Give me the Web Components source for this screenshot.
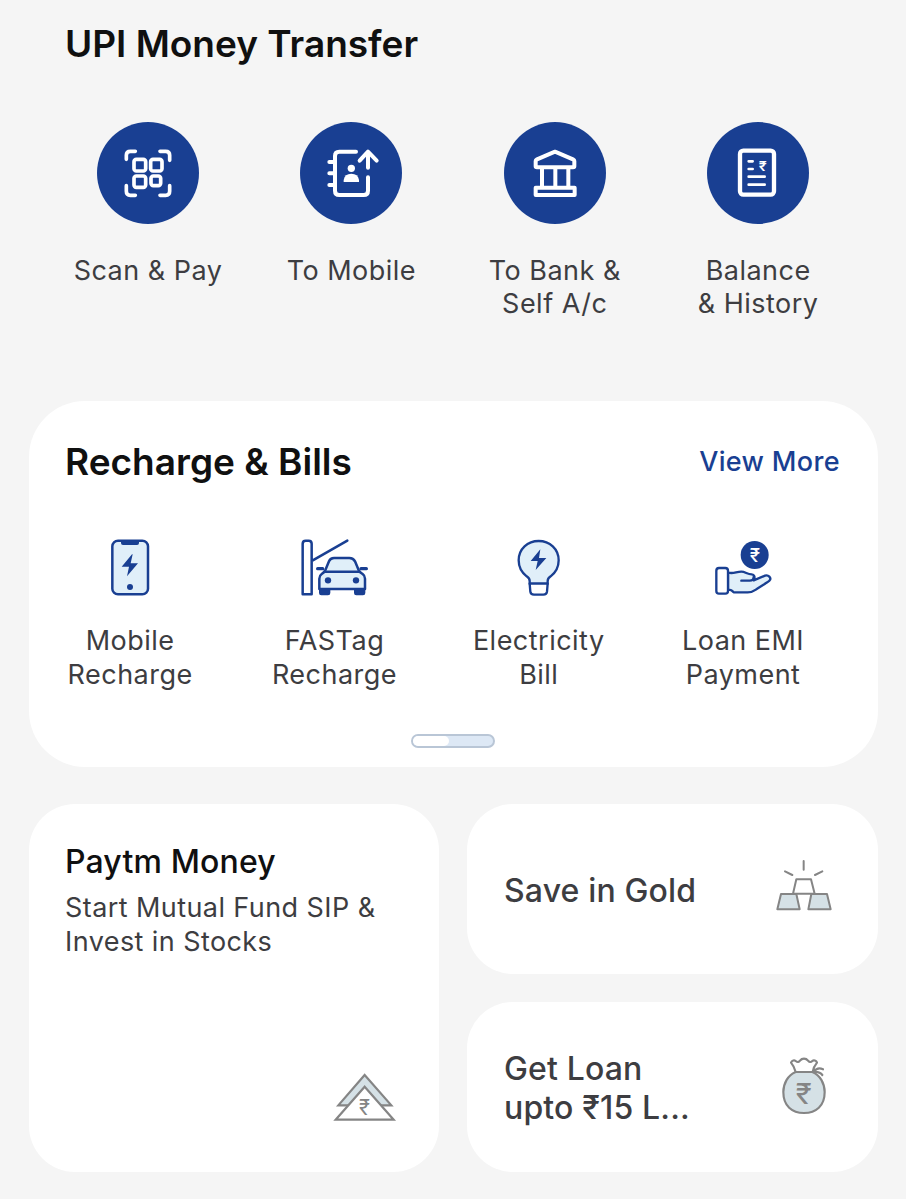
<!DOCTYPE html>
<html lang="en">
<head>
<meta charset="utf-8">
<title>UPI Money Transfer</title>
<style>
    body {
        margin: 0;
        background: #f5f5f5;
        font-family: Inter, "Liberation Sans", sans-serif;
        color: #101010;
    }
</style>
</head>
<body>
<home-page>
    <transfer-section slot="transfer" title="UPI Money Transfer">
        <pay-action text="Scan &amp; Pay">
            <svg viewBox="21 21 306 306" fill="none" stroke="#fff" stroke-width="11" stroke-linecap="round" stroke-linejoin="round">
                <path d="M109 133v-12q0-12 12-12h15M210 109h17q12 0 12 12v15M109 212v17q0 12 12 12h15M239 212v17q0 12-12 12h-17"/>
                <rect x="132" y="133" width="35" height="35" rx="7"/>
                <rect x="182" y="133" width="34" height="35" rx="7"/>
                <rect x="132" y="183" width="35" height="34" rx="7"/>
                <rect x="183" y="183" width="29" height="29" rx="7"/>
            </svg>
        </pay-action>
        <pay-action text="To Mobile">
            <svg viewBox="25 21 306 306" fill="none" stroke="#fff" stroke-width="12" stroke-linecap="round" stroke-linejoin="round">
                <path d="M193 110h-50q-13 0-13 13v104q0 13 13 13h73q13 0 13-13v-40M113 141h17M113 175h17M113 210h17M229 158v-47M204 137l25-27 26 27"/>
                <circle cx="179" cy="160" r="11" fill="#fff" stroke="none"/>
                <path d="M156 201v-6q3-19 23-19t23 19v6z" fill="#fff" stroke="none"/>
            </svg>
        </pay-action>
        <pay-action text="To Bank &amp;|Self A/c">
            <svg viewBox="25 21 306 306" fill="none" stroke="#fff" stroke-width="12" stroke-linejoin="round">
                <path d="M120 154v-16q0-3 4-5l54-23 54 23q4 2 4 5v16q0 3-4 3H124q-4 0-4-3z"/>
                <path d="M139 158v58M179 158v58M218 158v58"/>
                <path d="M120 218h117v22H120z"/>
            </svg>
        </pay-action>
        <pay-action text="Balance|&amp; History">
            <svg viewBox="27 21 306 306" fill="none" stroke="#fff" stroke-width="8" stroke-linecap="round">
                <rect x="126" y="107" width="102" height="132" rx="10" stroke-width="13"/>
                <path d="M152 139h12M152 162h12M152 185h48M152 209h48"/>
                <text x="182" y="169" textLength="24" lengthAdjust="spacingAndGlyphs" font-size="41" font-weight="600" fill="#fff" stroke="none">₹</text>
            </svg>
        </pay-action>
    </transfer-section>

    <bills-card slot="bills" title="Recharge &amp; Bills" link="View More">
        <bill-item text="Mobile|Recharge">
            <svg width="80" height="80" viewBox="0 -1 240 240" stroke="#193f92" stroke-width="7.5" stroke-linejoin="round">
                <rect x="67" y="46" width="107" height="161" rx="17" fill="#e0eff9"/>
                <path d="M93 45h54v8q0 6-6 6H99q-6 0-6-6z" fill="#193f92" stroke="none"/>
                <path d="M126 87l-31 37h22l-6 29 33-39h-22l6-27z" fill="#193f92" stroke="none"/>
                <circle cx="120" cy="185" r="9" fill="#193f92" stroke="none"/>
            </svg>
        </bill-item>
        <bill-item text="FASTag|Recharge">
            <svg width="90" height="80" viewBox="-3 -1 270 240" fill="none" stroke="#193f92" stroke-width="7.5" stroke-linecap="round" stroke-linejoin="round">
                <path d="M38 207V55q0-9 9-9h9q9 0 9 9v152zM67 106l105-60"/>
                <path d="M87 194h34v9q0 7-7 7H94q-7 0-7-7zM192 194h34v9q0 7-7 7h-20q-7 0-7-7z" fill="#193f92" stroke="none"/>
                <path d="M88 191v-31q0-9 7-14l9-7 13-31q4-10 15-10h46q12 0 17 10l13 31 10 7q7 5 7 14v31z" fill="#e0eff9"/>
                <path d="M102 139h108"/>
                <path d="M83 130h15M213 130h16" stroke-width="10"/>
                <circle cx="114" cy="165" r="9.5" fill="#193f92" stroke="none"/>
                <circle cx="198" cy="165" r="9.5" fill="#193f92" stroke="none"/>
            </svg>
        </bill-item>
        <bill-item text="Electricity|Bill">
            <svg width="80" height="80" viewBox="-2 -1 240 240" fill="#e0eff9" stroke="#193f92" stroke-width="7" stroke-linejoin="round">
                <path d="M90 175v-8q0-8-9-14-24-18-24-48c0-34 27-58 60-58s60 24 60 58q0 30-24 48-9 6-9 14v8z"/>
                <path d="M90 175h54l-2 24q-1 9-11 9h-28q-10 0-11-9z" fill="#fff"/>
                <path d="M122 72l-29 35h21l-6 27 32-36h-22l4-26z" fill="#193f92" stroke="none"/>
            </svg>
        </bill-item>
        <bill-item text="Loan EMI|Payment">
            <svg width="90" height="80" viewBox="-6 -1 270 240" fill="none" stroke="#193f92" stroke-width="7" stroke-linecap="round" stroke-linejoin="round">
                <path d="M84 142c18 4 24-3 40-3 12 0 18 8 31 8 8 0 11 8 6 18l34-14c10-4 20 7 14 14-2 3-8 6-15 11l-25 16q-14 10-29 9H101q-6-8-17-8z" fill="#e0eff9"/>
                <path d="M124 166h25q12 0 12-11"/>
                <rect x="49" y="128" width="35" height="77" rx="8" fill="#fff"/>
                <circle cx="164" cy="89" r="42" fill="#193f92" stroke="none"/>
                <text x="149" y="109" textLength="31" lengthAdjust="spacingAndGlyphs" font-size="55" font-weight="500" fill="#fff" stroke="none">₹</text>
            </svg>
        </bill-item>
    </bills-card>

    <money-card slot="money" title="Paytm Money" text="Start Mutual Fund SIP &amp;|Invest in Stocks">
        <svg width="80" height="70" viewBox="0 0 240 210" fill="#d5e1e6" stroke="#858585" stroke-width="6.5">
            <path d="M119 45l80 91H40z"/>
            <path d="M119 80l87 99H32z" fill="#fff"/>
            <text x="102" y="165" textLength="33" lengthAdjust="spacingAndGlyphs" font-size="64" font-weight="400" fill="#858585" stroke="none">₹</text>
        </svg>
    </money-card>
    <offer-card slot="offers" text="Save in Gold">
        <svg width="80" height="70" viewBox="0 12 240 210" fill="#d5e1e6" stroke="#858585" stroke-width="6" stroke-linejoin="round">
            <path d="M94 88h44l11 43H84z" fill="#fff"/>
            <path d="M48 132h46l10 46H37zM139 132h47l11 46h-67z"/>
            <path d="M116 33v26M60 64l22 11M172 64l-22 11" stroke-linecap="round"/>
        </svg>
    </offer-card>
    <offer-card slot="offers" text="Get Loan|upto ₹15 L...">
        <svg width="80" height="75" viewBox="0 0 240 225" fill="none" stroke="#858585" stroke-width="6.5" stroke-linecap="round" stroke-linejoin="round">
            <path d="M92 69c-24 10-37 35-37 60 0 42 26 63 62 63s62-21 62-63c0-25-13-50-37-60z" fill="#d5e1e6"/>
            <path d="M92 69c-3-12-8-21-14-28 3-7 10-8 14-5 6 5 10 3 13-1 6-8 18-8 24 0 3 4 8 6 13 1 4-4 12-2 14 5-6 7-11 16-13 28M147 68c7-10 16-12 27-7M147 69c12-1 20 2 25 9"/>
            <text x="92" y="165" textLength="48" lengthAdjust="spacingAndGlyphs" font-size="86" font-weight="400" fill="#858585" stroke="none">₹</text>
        </svg>
    </offer-card>
</home-page>

<script>
// Page
class HomePage extends HTMLElement {
    constructor() {
        super();
        const shadow = this.attachShadow({ mode: "open" });
        const template = document.createElement("template");
        template.innerHTML = `
            <style>
                :host {
                    display: flex;
                    flex-direction: column;
                    box-sizing: border-box;
                    height: 1199px;
                    padding: 0 28px 0 29px;
                    overflow: hidden;
                }
                .bills {
                    margin-bottom: 37px;
                }
                .bottom {
                    display: grid;
                    grid-template-columns: 410px 411px;
                    gap: 28px;
                    height: 367.5px;
                }
                .offers {
                    display: flex;
                    flex-direction: column;
                    gap: 28.5px;
                }
            </style>

            <slot name="transfer"></slot>
            <div class="bills"><slot name="bills"></slot></div>
            <div class="bottom">
                <slot name="money"></slot>
                <div class="offers"><slot name="offers"></slot></div>
            </div>
        `;
        shadow.appendChild(template.content.cloneNode(true));
    }
}
customElements.define("home-page", HomePage);


// Puts each "|" separated part on its own line
function setLines(element, text) {
    (text || "").split("|").forEach(line => {
        const div = document.createElement("div");
        div.textContent = line;
        element.appendChild(div);
    });
}


// Transfer Section
class TransferSection extends HTMLElement {
    constructor() {
        super();
        const shadow = this.attachShadow({ mode: "open" });
        const template = document.createElement("template");
        template.innerHTML = `
            <style>
                :host {
                    display: block;
                    height: 401px;
                }
                .title {
                    padding: 21px 0 0 36px;
                    font-size: 37px;
                    line-height: 46px;
                    font-weight: 600;
                    white-space: nowrap;
                }
                .row {
                    display: grid;
                    grid-template-columns: repeat(4, 203.4px);
                    margin: 55.4px 0 0 17.3px;
                }
            </style>

            <div class="title"></div>
            <div class="row"><slot></slot></div>
        `;
        shadow.appendChild(template.content.cloneNode(true));
        this._title = shadow.querySelector(".title");
    }

    connectedCallback() {
        this._title.textContent = this.getAttribute("title");
    }
}
customElements.define("transfer-section", TransferSection);


// Pay Action
class PayAction extends HTMLElement {
    constructor() {
        super();
        const shadow = this.attachShadow({ mode: "open" });
        const template = document.createElement("template");
        template.innerHTML = `
            <style>
                :host {
                    display: flex;
                    flex-direction: column;
                    align-items: center;
                    gap: 29.6px;
                }
                .circle {
                    width: 102px;
                    height: 102px;
                    border-radius: 50%;
                    background: #193f92;
                }
                ::slotted(svg) {
                    display: block;
                    width: 102px;
                    height: 102px;
                }
                .text {
                    font-size: 27px;
                    line-height: 33.5px;
                    letter-spacing: 0.48px;
                    color: #3d3d41;
                    text-align: center;
                    white-space: nowrap;
                }
            </style>

            <div class="circle"><slot></slot></div>
            <div class="text"></div>
        `;
        shadow.appendChild(template.content.cloneNode(true));
        this._text = shadow.querySelector(".text");
    }

    connectedCallback() {
        setLines(this._text, this.getAttribute("text"));
    }
}
customElements.define("pay-action", PayAction);


// Bills Card
class BillsCard extends HTMLElement {
    constructor() {
        super();
        const shadow = this.attachShadow({ mode: "open" });
        const template = document.createElement("template");
        template.innerHTML = `
            <style>
                :host {
                    display: flex;
                    flex-direction: column;
                    box-sizing: border-box;
                    height: 366px;
                    border-radius: 56px;
                    background: #fff;
                }
                .header {
                    display: flex;
                    justify-content: space-between;
                    align-items: center;
                    padding: 37px 38px 0 36px;
                    height: 46px;
                    white-space: nowrap;
                }
                .title {
                    font-size: 37px;
                    font-weight: 600;
                }
                .link {
                    margin-top: 1px;
                    font-size: 27px;
                    font-weight: 500;
                    letter-spacing: 0.35px;
                    color: #193f92;
                }
                .row {
                    display: grid;
                    grid-template-columns: repeat(4, 204.3px);
                    margin: 41px 0 0 -1px;
                }
                .pager {
                    box-sizing: border-box;
                    width: 84px;
                    height: 14px;
                    margin: 43px 0 0 382px;
                    border: 2px solid #b9c6d6;
                    border-radius: 7px;
                    background: #dde8f5;
                }
                .thumb {
                    width: 36px;
                    height: 10px;
                    border-radius: 5px;
                    background: #fff;
                }
            </style>

            <div class="header">
                <div class="title"></div>
                <div class="link"></div>
            </div>
            <div class="row"><slot></slot></div>
            <div class="pager"><div class="thumb"></div></div>
        `;
        shadow.appendChild(template.content.cloneNode(true));
        this._title = shadow.querySelector(".title");
        this._link = shadow.querySelector(".link");
    }

    connectedCallback() {
        this._title.textContent = this.getAttribute("title");
        this._link.textContent = this.getAttribute("link");
    }
}
customElements.define("bills-card", BillsCard);


// Bill Item
class BillItem extends HTMLElement {
    constructor() {
        super();
        const shadow = this.attachShadow({ mode: "open" });
        const template = document.createElement("template");
        template.innerHTML = `
            <style>
                :host {
                    display: flex;
                    flex-direction: column;
                    align-items: center;
                    gap: 19.4px;
                }
                ::slotted(svg) {
                    display: block;
                }
                .text {
                    font-size: 27px;
                    line-height: 33.5px;
                    letter-spacing: 0.48px;
                    color: #3d3d41;
                    text-align: center;
                    white-space: nowrap;
                }
            </style>

            <slot></slot>
            <div class="text"></div>
        `;
        shadow.appendChild(template.content.cloneNode(true));
        this._text = shadow.querySelector(".text");
    }

    connectedCallback() {
        setLines(this._text, this.getAttribute("text"));
    }
}
customElements.define("bill-item", BillItem);


// Money Card
class MoneyCard extends HTMLElement {
    constructor() {
        super();
        const shadow = this.attachShadow({ mode: "open" });
        const template = document.createElement("template");
        template.innerHTML = `
            <style>
                :host {
                    display: flex;
                    flex-direction: column;
                    box-sizing: border-box;
                    padding: 38px 34px 42px 36px;
                    border-radius: 46px;
                    background: #fff;
                    white-space: nowrap;
                }
                .title {
                    font-size: 32px;
                    line-height: 40px;
                    font-weight: 500;
                    letter-spacing: 0.15px;
                }
                .text {
                    margin-top: 9px;
                    font-size: 27px;
                    line-height: 33.5px;
                    letter-spacing: 0.42px;
                    color: #3d3d41;
                }
                ::slotted(svg) {
                    display: block;
                    margin: auto 0 0 auto;
                }
            </style>

            <div class="title"></div>
            <div class="text"></div>
            <slot></slot>
        `;
        shadow.appendChild(template.content.cloneNode(true));
        this._title = shadow.querySelector(".title");
        this._text = shadow.querySelector(".text");
    }

    connectedCallback() {
        this._title.textContent = this.getAttribute("title");
        setLines(this._text, this.getAttribute("text"));
    }
}
customElements.define("money-card", MoneyCard);


// Offer Card
class OfferCard extends HTMLElement {
    constructor() {
        super();
        const shadow = this.attachShadow({ mode: "open" });
        const template = document.createElement("template");
        template.innerHTML = `
            <style>
                :host {
                    display: flex;
                    align-items: center;
                    justify-content: space-between;
                    box-sizing: border-box;
                    height: 169.5px;
                    padding: 0 33px 0 37px;
                    border-radius: 46px;
                    background: #fff;
                }
                .text {
                    padding-top: 3px;
                    font-size: 32px;
                    line-height: 39px;
                    font-weight: 500;
                    letter-spacing: 0.15px;
                    color: #3d3d41;
                    white-space: nowrap;
                }
            </style>

            <div class="text"></div>
            <slot></slot>
        `;
        shadow.appendChild(template.content.cloneNode(true));
        this._text = shadow.querySelector(".text");
    }

    connectedCallback() {
        setLines(this._text, this.getAttribute("text"));
    }
}
customElements.define("offer-card", OfferCard);
</script>
</body>
</html>
